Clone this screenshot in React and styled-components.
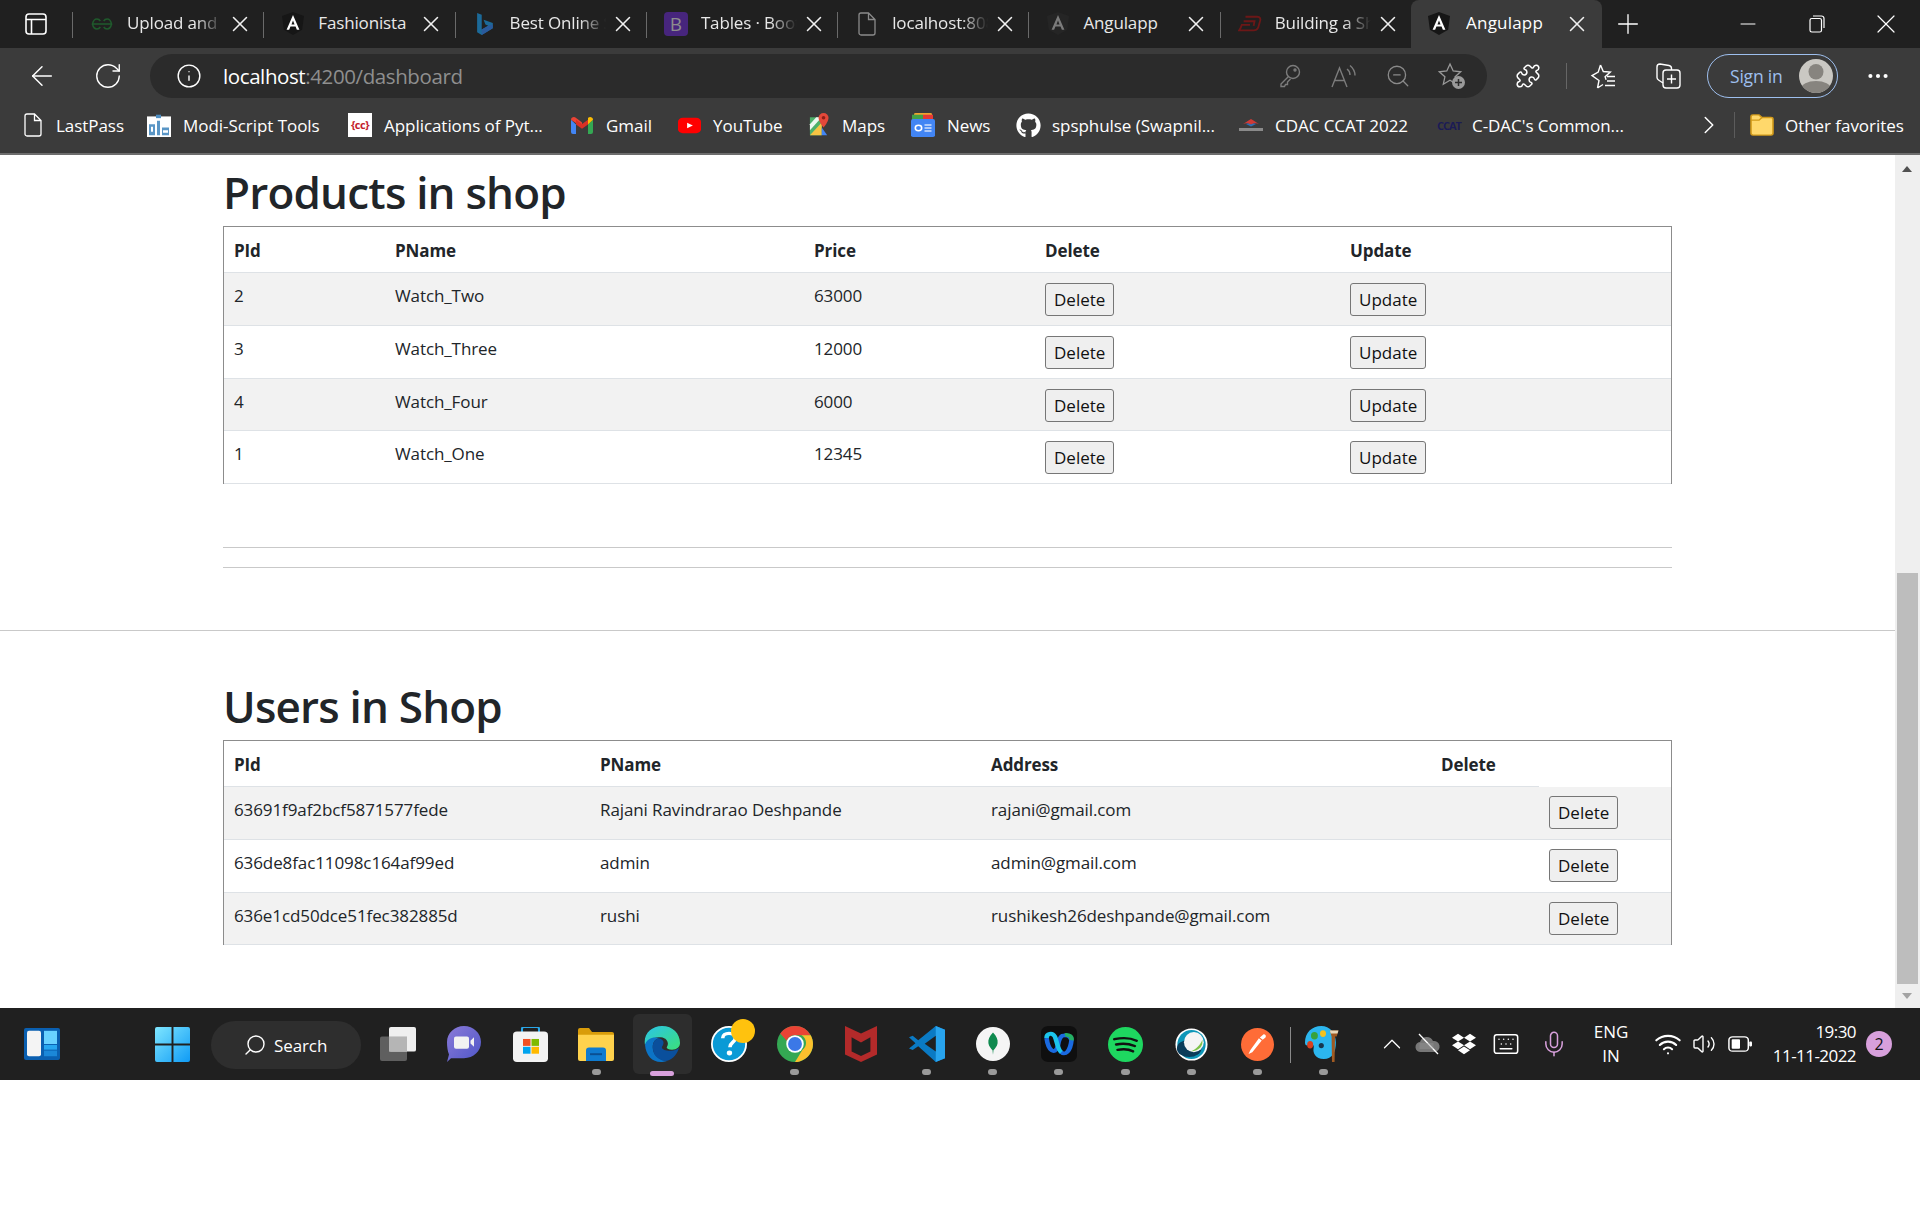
import React from "react";
import styled, { createGlobalStyle } from "styled-components";
import { ArrowLeft, RotateCw, Info, ZoomOut, Puzzle, X, Plus, Minus, ChevronRight, ChevronUp, Mic, Search, Keyboard, Wifi, Volume2, MoreHorizontal } from "lucide-react";
import { FaGithub, FaDropbox } from "react-icons/fa";

const SANS = `"Open Sans", "Noto Sans", "Liberation Sans", sans-serif`;

const Global = createGlobalStyle`
  html, body { margin: 0; padding: 0; background: #fff; font-family: ${SANS}; }
  * { box-sizing: border-box; }
`;

const Screen = styled.div`
  width: 1920px;
  height: 1214px;
  display: flex;
  flex-direction: column;
  background: #fff;
  overflow: hidden;
`;

/* ---------- tab strip ---------- */
const TabBar = styled.div`
  height: 48px;
  flex: none;
  display: flex;
  align-items: stretch;
  background: #202020;
  color: #fff;
`;
const PanelSlot = styled.div`
  width: 72px;
  display: flex;
  align-items: center;
  justify-content: center;
  padding-right: 1px;
`;
const Tab = styled.div`
  width: 191.300px;
  flex: none;
  position: relative;
  display: flex;
  align-items: center;
  padding-left: ${p => (p.$active ? "16px" : "18px")};
  padding-bottom: 1px;
  background: ${p => (p.$active ? "#3b3b3b" : "transparent")};
  border-radius: 8px 8px 0 0;
  &::before {
    content: "";
    display: ${p => (p.$plain ? "none" : "block")};
    position: absolute;
    left: 0;
    top: 12px;
    bottom: 10px;
    width: 1px;
    background: #6a6a6a;
  }
`;
const TabIcon = styled.span`
  width: 24px;
  height: 24px;
  flex: none;
  display: flex;
  align-items: center;
  justify-content: center;
  margin-right: ${p => (p.$active ? "15px" : "13px")};
`;
const TabLabel = styled.span`
  width: ${p => (p.$active ? "94px" : "96px")};
  flex: none;
  overflow: hidden;
  white-space: nowrap;
  font-size: 17px;
  line-height: 22px;
  margin-bottom: 1px;
  letter-spacing: ${p => (p.$active ? "0.2px" : "-0.15px")};
  color: ${p => (p.$active ? "#fff" : "#e8e8e8")};
  mask-image: ${p => (p.$fade ? "linear-gradient(to right, #000 72%, transparent 100%)" : "none")};
`;
const TabClose = styled.span`
  display: flex;
  margin-left: 4px;
  color: #f0f0f0;
`;
const NewTab = styled.div`
  width: 52px;
  display: flex;
  align-items: center;
  justify-content: center;
`;
const WindowControls = styled.div`
  margin-left: auto;
  display: flex;
  align-items: center;
`;
const WindowButton = styled.div`
  width: 69px;
  height: 48px;
  display: flex;
  align-items: center;
  justify-content: center;
`;
const BootstrapMark = styled.span`
  width: 24px;
  height: 24px;
  border-radius: 4px;
  background: #47257d;
  color: #8d8d8d;
  font-size: 19px;
  line-height: 24px;
  text-align: center;
`;

/* ---------- toolbar ---------- */
const Toolbar = styled.div`
  height: 64px;
  flex: none;
  display: flex;
  align-items: center;
  padding: 0 0 8px 9px;
  background: #3b3b3b;
  color: #fff;
`;
const NavButton = styled.div`
  width: ${p => p.$w || 66}px;
  height: 44px;
  flex: none;
  display: flex;
  align-items: center;
  justify-content: center;
`;
const Omnibox = styled.div`
  width: 1337px;
  height: 44px;
  margin: 0 3px 0 9px;
  flex: none;
  display: flex;
  align-items: center;
  padding-left: 26px;
  border-radius: 22px;
  background: #2b2b2b;
`;
const UrlHost = styled.span`
  margin-left: 21px;
  font-size: 20.500px;
  letter-spacing: -0.4px;
  color: #fff;
`;
const UrlRest = styled.span`
  font-size: 20.500px;
  letter-spacing: -0.4px;
  color: #8f8f8f;
`;
const OmniIcons = styled.div`
  margin-left: auto;
  display: flex;
  padding-right: 8px;
`;
const ToolDivider = styled.div`
  width: 1px;
  height: 26px;
  background: #666;
  flex: none;
`;
const SignIn = styled.div`
  width: 131px;
  height: 44px;
  flex: none;
  margin-left: 10px;
  display: flex;
  align-items: center;
  gap: 16px;
  padding-left: 22px;
  border: 1.500px solid #9ebfee;
  border-radius: 22px;
  font-size: 17.500px;
  letter-spacing: -0.2px;
  color: #9ebfee;
`;
const Avatar = styled.span`
  width: 34px;
  height: 34px;
  flex: none;
  border-radius: 50%;
  overflow: hidden;
  display: flex;
`;

/* ---------- bookmarks ---------- */
const Bookmarks = styled.div`
  height: 43px;
  flex: none;
  display: flex;
  align-items: flex-start;
  background: #3b3b3b;
  border-bottom: 2px solid #6d6d6d;
  color: #fff;
`;
const Bookmark = styled.div`
  width: ${p => p.$w}px;
  height: 26px;
  flex: none;
  display: flex;
  align-items: center;
  padding-left: ${p => p.$pad}px;
  gap: ${p => p.$gap || 12}px;
  font-size: 17px;
  letter-spacing: -0.05px;
  white-space: nowrap;
`;
const CcMark = styled.span`
  width: 24px;
  height: 24px;
  flex: none;
  background: #fff;
  color: #c3202b;
  font-size: 11px;
  font-weight: 700;
  letter-spacing: -0.5px;
  line-height: 24px;
  text-align: center;
`;
const CcatMark = styled.span`
  width: 24px;
  flex: none;
  color: #1b1b55;
  font-size: 11px;
  font-weight: 700;
  letter-spacing: -1px;
  text-align: center;
`;
const BookmarkMore = styled.div`
  width: 52px;
  height: 26px;
  flex: none;
  display: flex;
  align-items: center;
  justify-content: center;
  border-right: 1px solid #5c5c5c;
`;

/* ---------- page ---------- */
const Viewport = styled.div`
  height: 853px;
  flex: none;
  display: flex;
  align-items: stretch;
`;
const Page = styled.main`
  flex: 1;
  min-width: 0;
  padding-top: 13px;
  color: #212529;
`;
const Container = styled.section`
  width: 1449px;
  margin-left: 223px;
`;
const Heading = styled.h2`
  margin: 0 0 ${p => p.$after}px;
  font-size: 44px;
  font-weight: 600;
  line-height: 48px;
  letter-spacing: -0.8px;
`;
const Table = styled.table`
  width: 1449px;
  table-layout: fixed;
  border-collapse: separate;
  border-spacing: 0;
  border: 1px solid #8c8c8c;
  border-bottom: 0;
  font-size: 17px;
  letter-spacing: -0.1px;
`;
const Col = styled.col`
  width: ${p => p.$w}px;
`;
const Th = styled.th`
  height: 46px;
  padding: 2px 10px 0;
  text-align: left;
  font-weight: 700;
  border-bottom: 1px solid #dee2e6;
`;
const Row = styled.tr`
  background: ${p => (p.$odd ? "#f2f2f2" : "#fff")};
`;
const Td = styled.td`
  height: 52.750px;
  padding: 11px 10px 0;
  vertical-align: top;
  line-height: 24px;
  border-bottom: 1px solid #dee2e6;
`;
const ActionTd = styled.td`
  height: 52.750px;
  padding: ${p => p.$top}px 10px 0;
  vertical-align: top;
  border-bottom: 1px solid #dee2e6;
`;
const RowButton = styled.button`
  height: 33px;
  padding: 0 8px;
  background: #efefef;
  border: 1px solid #767676;
  border-radius: 3px;
  color: #111;
  font-family: inherit;
  font-size: 17px;
  letter-spacing: 0;
`;
const Rule = styled.hr`
  margin: ${p => p.$top}px 0 0;
  border: 0;
  border-top: 1px solid #c9c9c9;
`;
const PageRule = styled(Rule)`
  margin-bottom: 51px;
`;
const Scrollbar = styled.div`
  width: 25px;
  flex: none;
  position: relative;
  background: #efefef;
`;
const ScrollArrow = styled.div`
  position: absolute;
  left: 7px;
  ${p => (p.$up ? "top: 11px;" : "bottom: 9px;")}
  width: 0;
  height: 0;
  border-left: 5.500px solid transparent;
  border-right: 5.500px solid transparent;
  ${p => (p.$up ? "border-bottom: 6px solid #505050;" : "border-top: 6px solid #a3a3a3;")}
`;
const ScrollThumb = styled.div`
  position: absolute;
  left: 2px;
  right: 2px;
  top: 418px;
  height: 411px;
  background: #bdbdbd;
`;

/* ---------- taskbar ---------- */
const Taskbar = styled.footer`
  height: 72px;
  flex: none;
  display: flex;
  align-items: stretch;
  background: #202020;
  color: #fff;
`;
const WidgetSlot = styled.div`
  width: 60px;
  flex: none;
  padding-left: 24px;
  display: flex;
  align-items: center;
`;
const StartSlot = styled.div`
  width: 151px;
  flex: none;
  padding-left: 95px;
  display: flex;
  align-items: center;
`;
const SearchPill = styled.div`
  width: 150px;
  height: 48px;
  margin: 13px 4px 0 0;
  flex: none;
  display: flex;
  align-items: center;
  gap: 7px;
  padding-left: 32px;
  border-radius: 24px;
  background: #2e2e2e;
  font-size: 17px;
  letter-spacing: -0.1px;
`;
const TaskGroup = styled.div`
  display: flex;
  flex: none;
`;
const TaskSlot = styled.div`
  width: 66.100px;
  height: 72px;
  flex: none;
  position: relative;
  display: flex;
  align-items: center;
  justify-content: center;
  &::after {
    content: "";
    display: ${p => (p.$dot ? "block" : "none")};
    position: absolute;
    left: 50%;
    bottom: ${p => (p.$active ? "4px" : "5px")};
    width: ${p => (p.$active ? "24px" : "9px")};
    height: ${p => (p.$active ? "5px" : "6px")};
    margin-left: ${p => (p.$active ? "-12px" : "-4.5px")};
    border-radius: 3px;
    background: ${p => (p.$active ? "#d8a0dc" : "#9a9a9a")};
  }
  &::before {
    content: "";
    display: ${p => (p.$divider ? "block" : "none")};
    position: absolute;
    left: 0;
    top: 19px;
    height: 36px;
    width: 1px;
    background: #8a8a8a;
  }
`;
const ActiveTile = styled.div`
  width: 59px;
  height: 60px;
  display: flex;
  align-items: center;
  justify-content: center;
  border-radius: 6px;
  background: #2d2d2d;
`;
const Tray = styled.div`
  margin-left: auto;
  padding-right: 28px;
  display: flex;
  align-items: center;
`;
const TraySlot = styled.div`
  width: ${p => p.$w}px;
  flex: none;
  display: flex;
  align-items: center;
  justify-content: center;
  color: ${p => p.$color || "#fff"};
`;
const LangText = styled.div`
  width: 66px;
  flex: none;
  text-align: center;
  font-size: 17px;
  line-height: 24px;
  letter-spacing: -0.1px;
`;
const Clock = styled.div`
  width: 92px;
  flex: none;
  text-align: right;
  font-size: 17px;
  line-height: 24px;
  letter-spacing: -0.55px;
  white-space: nowrap;
`;
const Badge = styled.div`
  width: 26px;
  height: 26px;
  flex: none;
  margin-left: 10px;
  border-radius: 50%;
  background: #d8a0dc;
  color: #111;
  font-size: 16px;
  line-height: 26px;
  text-align: center;
`;
const HelpWrap = styled.div`
  position: relative;
  width: 36px;
  height: 36px;
  display: flex;
`;
const HelpBadge = styled.div`
  position: absolute;
  right: -8px;
  top: -7px;
  width: 24px;
  height: 24px;
  border-radius: 50%;
  background: #ffc20e;
`;

/* ---------- drawn icons ---------- */
const PanelIcon = () => (
  <svg width="22" height="24" viewBox="0 0 22 24" fill="none" stroke="#fff" strokeWidth="1.6">
    <rect x="1" y="2" width="20" height="20" rx="3" />
    <path d="M1 7.500h20M6.500 7.500V22" />
  </svg>
);
const GfgIcon = () => (
  <svg width="22" height="14" viewBox="0 0 22 14" fill="none" stroke="#1f5a2c" strokeWidth="1.5">
    <path d="M11 7H1.500c.6-3 2.300-5 4.400-5 1.500 0 2.700.8 3.400 2M11 7h9.500c-.6-3-2.300-5-4.400-5-1.500 0-2.700.8-3.400 2M1.500 7c.6 3 2.300 5 4.400 5 1.500 0 2.700-.8 3.400-2M20.500 7c-.6 3-2.300 5-4.400 5-1.500 0-2.700-.8-3.400-2" />
  </svg>
);
const AngularIcon = ({ dim }) => (
  <svg width="22" height="23" viewBox="0 0 24 26" preserveAspectRatio="none">
    <path d="M12 0 24 4.400 22 20 12 26 2 20 0 4.400Z" fill={dim ? "#252525" : "#161616"} />
    <path d="M12 3.500 5 20h2.800l1.400-3.600h5.600l1.400 3.600H19ZM10.300 14 12 9.600l1.700 4.400Z" fill={dim ? "#7b7b7b" : "#fff"} fillRule="evenodd" />
  </svg>
);
const BingIcon = () => (
  <svg width="17" height="24" viewBox="0 0 18 26">
    <path d="M1 1 6 3v16l7-4-3-1.500-2-5 10 3.500v5.500L6 25l-5-3Z" fill="#1c6a99" />
    <path d="M6 19l7-4 4.900-1.500v4L6 25Z" fill="#2a5a9c" />
  </svg>
);
const FileIcon = ({ w = 18, h = 24, color = "#8a8a8a" }) => (
  <svg width={w} height={h} viewBox="0 0 18 24" fill="none" stroke={color} strokeWidth="1.3">
    <path d="M3 1h7.500L17 7.500V21a2 2 0 0 1-2 2H3a2 2 0 0 1-2-2V3a2 2 0 0 1 2-2ZM10.500 1v6.500H17" />
  </svg>
);
const RedIcon = () => (
  <svg width="26" height="20" viewBox="0 0 26 22" fill="none" stroke="#6c1717" strokeWidth="2">
    <path d="M8 3h13c3 0 4 2 3 5l-2 7c-1 2-2 3-5 3H1c1-1 2-3 3-6h9M6 8h12l-1 5" />
  </svg>
);
const RestoreIcon = () => (
  <svg width="16" height="18" viewBox="0 0 16 18" fill="none" stroke="#fff" strokeWidth="1.200">
    <rect x="1" y="3.500" width="11.500" height="13.500" rx="1.800" />
    <path d="M4 1h8.500A2.500 2.500 0 0 1 15 3.500V13" />
  </svg>
);
const KeyIcon = () => (
  <svg width="22" height="24" viewBox="0 0 22 24" fill="none" stroke="#7c7c7c" strokeWidth="1.400">
    <circle cx="14" cy="8" r="6.500" />
    <circle cx="16" cy="6" r="1" />
    <path d="M9.500 12.500 2 20v2.500h3.500l1-2h2v-2.500l3-3" />
  </svg>
);
const ReadIcon = () => (
  <svg width="26" height="24" viewBox="0 0 26 24" fill="none" stroke="#7c7c7c" strokeWidth="1.400">
    <path d="M1 23 8.500 4 16 23M4 16.500h9M16 5c2 1.500 3 3.500 3 6M19 1.500c3 2.500 5 5.500 5 10" />
  </svg>
);
const FavAddIcon = () => (
  <svg width="28" height="28" viewBox="0 0 28 28" fill="none">
    <path d="M12 2l3.200 7 7.500.8-5.600 5 1.600 7.400-6.700-3.900-6.700 3.900 1.600-7.400-5.600-5 7.500-.8Z" stroke="#9a9a9a" strokeWidth="1.300" />
    <circle cx="20.500" cy="20.500" r="6.500" fill="#9a9a9a" />
    <path d="M20.500 17v7M17 20.500h7" stroke="#2b2b2b" strokeWidth="1.500" />
  </svg>
);
const FavoritesIcon = () => (
  <svg width="26" height="26" viewBox="0 0 26 26" fill="none" stroke="#fff" strokeWidth="1.400">
    <path d="M10.500 2l2.800 6.500 7 .6-5.200 4.600 1 3M7.500 25l1.500-7.500L2 12.600l6.200-3.500 2.300-7.100M7.500 25l5.500-3.500M17 13.500h8M17 18h8M15 22.500h10" />
  </svg>
);
const CollectionsIcon = () => (
  <svg width="26" height="28" viewBox="0 0 26 28" fill="none" stroke="#fff" strokeWidth="1.400">
    <path d="M8 21 3.500 18A3 3 0 0 1 2 15.500V5a3 3 0 0 1 3-3l9 1.500a3 3 0 0 1 2.500 3V8" />
    <rect x="8" y="8" width="17" height="18" rx="3" />
    <path d="M16.500 12.500v9M12 17h9" />
  </svg>
);
const AvatarArt = () => (
  <svg width="34" height="34" viewBox="0 0 34 40" preserveAspectRatio="none">
    <rect width="34" height="40" fill="#cac8c3" />
    <ellipse cx="17" cy="15" rx="7.500" ry="9" fill="#87847f" />
    <ellipse cx="17" cy="35" rx="15" ry="9" fill="#87847f" />
  </svg>
);
const ModiIcon = () => (
  <svg width="24" height="24" viewBox="0 0 24 28" preserveAspectRatio="none">
    <rect y="4" width="24" height="24" fill="#fff" />
    <path d="M2 13h6v13H2ZM10 9h3v17h-3ZM15 17h7v9h-7Z" fill="#5a96c6" />
    <path d="M4 16h2v6H4ZM16 20h5v3h-5Z" fill="#fff" />
    <rect x="9" y="2" width="5" height="4" fill="#4f8fc2" />
  </svg>
);
const GmailIcon = () => (
  <svg width="22" height="17" viewBox="0 0 22 18" preserveAspectRatio="none">
    <path d="M0 3v13a2 2 0 0 0 2 2h3V8Z" fill="#4285f4" />
    <path d="M22 3v13a2 2 0 0 1-2 2h-3V8Z" fill="#34a853" />
    <path d="M0 3c0-2.500 2.800-3.800 4.800-2.200L11 5.800v5L0 3Z" fill="#ea4335" />
    <path d="M5 8 11 12.500 17 8V2.800L11 7.500 5 2.800Z" fill="#d93025" />
    <path d="M22 3c0-2.500-2.800-3.800-4.800-2.200L17 1v7Z" fill="#fbbc04" />
  </svg>
);
const YoutubeIcon = () => (
  <svg width="23" height="17" viewBox="0 0 24 22" preserveAspectRatio="none">
    <rect y="1" width="24" height="20" rx="5" fill="#f00" />
    <path d="M9.500 7.500v7l6-3.500Z" fill="#fff" />
  </svg>
);
const MapsIcon = () => (
  <svg width="20" height="24" viewBox="0 0 22 28" preserveAspectRatio="none">
    <path d="M1 5h13v21L1 26Z" fill="#4db06a" />
    <path d="M1 26 14 11v15Z" fill="#f6c343" />
    <path d="M1 13 8 5h6L1 20Z" fill="#fff" opacity=".9" />
    <path d="M14 17 20 26h-6Z" fill="#4285f4" />
    <path d="M16 0a5.500 5.500 0 0 1 5.500 5.500C21.500 10 16 17 16 17s-5.500-7-5.500-11.500A5.500 5.500 0 0 1 16 0Z" fill="#e3483a" />
    <circle cx="16" cy="5.500" r="2" fill="#8d1f17" />
  </svg>
);
const NewsIcon = () => (
  <svg width="24" height="24" viewBox="0 0 24 28" preserveAspectRatio="none">
    <rect x="3" width="18" height="8" rx="1.500" fill="#f0a32f" />
    <rect x="1" y="2" width="11" height="7" fill="#43a047" />
    <rect x="12" y="2" width="10" height="7" fill="#e53935" />
    <rect y="7" width="24" height="21" rx="2" fill="#4285f4" />
    <circle cx="7.500" cy="17.500" r="3.200" fill="none" stroke="#fff" strokeWidth="1.600" />
    <path d="M13.500 14h7M13.500 17.500h7M13.500 21h7" stroke="#cfe0fb" strokeWidth="1.600" />
  </svg>
);
const CdacIcon = () => (
  <svg width="24" height="14" viewBox="0 0 24 14">
    <path d="M4 6c3-2 5-3 8-5 3 2 5 3 8 5-3-1-5-1-8 1-3-2-5-2-8-1Z" fill="#cf3a36" />
    <path d="M7 6c2-.6 3-.6 5 .6 2-1.200 3-1.200 5-.6l-5 2.500Z" fill="#2f6fb4" />
    <rect y="10" width="24" height="3" fill="#8a8a8a" />
  </svg>
);
const FolderIcon = () => (
  <svg width="24" height="22" viewBox="0 0 24 25" preserveAspectRatio="none">
    <path d="M1 3a2 2 0 0 1 2-2h6l3 3h9a2 2 0 0 1 2 2v16a2 2 0 0 1-2 2H3a2 2 0 0 1-2-2Z" fill="#ffd86b" stroke="#d29a1a" strokeWidth="1.600" />
    <path d="M1 7h8l3-3" fill="none" stroke="#d29a1a" strokeWidth="1.600" />
  </svg>
);
const WidgetsIcon = () => (
  <svg width="36" height="32" viewBox="0 0 36 34" preserveAspectRatio="none">
    <rect width="36" height="34" rx="2" fill="#0a5fb0" />
    <rect x="3" y="3" width="14" height="27" rx="2" fill="#f4f4f4" />
    <rect x="20" y="3" width="13" height="14" fill="#69d2ff" />
    <rect x="20" y="18" width="13" height="5" fill="#27a7f0" />
    <rect x="20" y="24" width="13" height="6" fill="#1b87d8" />
  </svg>
);
const WindowsIcon = () => (
  <svg width="35" height="35" viewBox="0 0 36 36">
    <defs>
      <linearGradient id="winG" x1="0" y1="0" x2="1" y2="1">
        <stop offset="0" stopColor="#7fe6ff" />
        <stop offset="1" stopColor="#0f9bf5" />
      </linearGradient>
    </defs>
    <path d="M0 2a2 2 0 0 1 2-2h15v17H0ZM19 0h15a2 2 0 0 1 2 2v15H19ZM0 19h17v17H2a2 2 0 0 1-2-2ZM19 19h17v15a2 2 0 0 1-2 2H19Z" fill="url(#winG)" />
  </svg>
);
const TaskViewIcon = () => (
  <svg width="36" height="34" viewBox="0 0 36 36" preserveAspectRatio="none">
    <rect y="10" width="27" height="26" rx="2" fill="#5f5f5f" />
    <rect x="9" width="27" height="26" rx="2" fill="#efefef" />
    <rect x="9" y="10" width="18" height="16" fill="#b5b5b5" />
  </svg>
);
const TeamsIcon = () => (
  <svg width="34" height="36" viewBox="0 0 34 38" preserveAspectRatio="none">
    <defs>
      <linearGradient id="teamsG" x1="0" y1="0" x2="1" y2="1">
        <stop offset="0" stopColor="#8a7ad8" />
        <stop offset="1" stopColor="#4e56c8" />
      </linearGradient>
    </defs>
    <path d="M17 0c9.400 0 17 7.500 17 17 0 10-7.600 17-17 17H4l-4 4 2-8C.6 27 0 22 0 17 0 7.500 7.600 0 17 0Z" fill="url(#teamsG)" />
    <rect x="7" y="11" width="15" height="13" rx="2" fill="#f2f2f2" />
    <path d="M23.500 15.500 27 12v10l-3.500-3.500Z" fill="#f2f2f2" />
  </svg>
);
const StoreIcon = () => (
  <svg width="35" height="35" viewBox="0 0 35 38" preserveAspectRatio="none">
    <path d="M9 6V2a2 2 0 0 1 2-2h13a2 2 0 0 1 2 2v4" fill="none" stroke="#2aa7e8" strokeWidth="2" />
    <rect y="5" width="35" height="33" rx="4" fill="#f3f3f3" />
    <rect x="10" y="13" width="7.500" height="7.500" fill="#f25022" />
    <rect x="18.500" y="13" width="7.500" height="7.500" fill="#7fba00" />
    <rect x="10" y="21.500" width="7.500" height="7.500" fill="#00a4ef" />
    <rect x="18.500" y="21.500" width="7.500" height="7.500" fill="#ffb900" />
  </svg>
);
const ExplorerIcon = () => (
  <svg width="36" height="33" viewBox="0 0 36 34" preserveAspectRatio="none">
    <path d="M0 2a2 2 0 0 1 2-2h9l3 4h20a2 2 0 0 1 2 2v5H0Z" fill="#d99c0a" />
    <path d="M0 7h36v25a2 2 0 0 1-2 2H2a2 2 0 0 1-2-2Z" fill="#ffd24d" />
    <path d="M8 23a3 3 0 0 1 3-3h14a3 3 0 0 1 3 3v11H8Z" fill="#0f7bd0" />
    <rect x="12" y="26" width="12" height="2" fill="#0a4f92" />
  </svg>
);
const EdgeIcon = () => (
  <svg width="36" height="36" viewBox="0 0 36 38" preserveAspectRatio="none">
    <defs>
      <linearGradient id="edgeA" x1="0" y1="0" x2="1" y2="1">
        <stop offset="0" stopColor="#2bc4e8" />
        <stop offset="1" stopColor="#3be07a" />
      </linearGradient>
    </defs>
    <path d="M18 0c11 0 18 8 18 18 0 4-3 7-8 7-4 0-6-2-5-3 2-3 1-9-6-10C9 11 3 16 1 20-1 9 7 0 18 0Z" fill="url(#edgeA)" />
    <path d="M1 20C3 13 10 11 15 13c-5 1-7 6-6 12 1 7 8 11 14 12-3 1-4 1-6 1C8 38 2 31 1 20Z" fill="#0c74c6" />
    <path d="M9 25c-1-6 1-11 6-12 6 2 5 6 3 9-1 2 3 5 9 4 3 0 6-1 8-3-2 8-8 14-14 14-6-1-11-5-12-12Z" fill="#0a4f9c" />
  </svg>
);
const HelpArt = () => (
  <svg width="36" height="36" viewBox="0 0 40 44" preserveAspectRatio="none">
    <ellipse cx="20" cy="22" rx="19" ry="21" fill="#0a9ad6" stroke="#fff" strokeWidth="2" />
    <path d="M13 15c0-4 3-6 7-6s7 2 7 6c0 5-6 5-6 11" fill="none" stroke="#fff" strokeWidth="4" />
    <circle cx="20.500" cy="33" r="3" fill="#fff" />
  </svg>
);
const ChromeIcon = () => (
  <svg width="36" height="36" viewBox="0 0 39 39">
    <circle cx="19.500" cy="19.500" r="19.500" fill="#34a853" />
    <path d="M19.500 0a19.500 19.500 0 0 1 17 10H19.500a9.500 9.500 0 0 0-9 6L3.500 8A19.500 19.500 0 0 1 19.500 0Z" fill="#ea4335" />
    <path d="M36.500 10a19.500 19.500 0 0 1-17 29l8-13a9.500 9.500 0 0 0-1-16Z" fill="#fbc02d" />
    <circle cx="19.500" cy="19.500" r="9.500" fill="#fff" />
    <circle cx="19.500" cy="19.500" r="7.500" fill="#3b78e7" />
  </svg>
);
const McafeeIcon = () => (
  <svg width="32" height="36" viewBox="0 0 34 48" preserveAspectRatio="none">
    <path d="M0 0 17 10 34 0v38L17 48 0 38ZM7 15v19l10 6 10-6V15l-10 7Z" fill="#b32a2a" fillRule="evenodd" />
  </svg>
);
const VscodeIcon = () => (
  <svg width="36" height="36" viewBox="0 0 39 48" preserveAspectRatio="none">
    <path d="M29 0 39 5v38l-10 5L10 27l-6 5-4-2 7-7-7-8 4-2 6 6Z" fill="#0a7ac4" />
    <path d="M29 0 39 5v38l-10 5Z" fill="#28a4ee" />
    <path d="M29 13v21l-12-10.500Z" fill="#202020" />
  </svg>
);
const MongoIcon = () => (
  <svg width="34" height="34" viewBox="0 0 37 44" preserveAspectRatio="none">
    <ellipse cx="18.500" cy="22" rx="18.500" ry="22" fill="#f5f5f5" />
    <path d="M18.500 7c4 5 5.500 9 5 14-.5 4-3 7-4.500 9l-.5 6-.5-6c-1.500-2-4-5-4.500-9-.5-5 1-9 5-14Z" fill="#0f8a4f" />
  </svg>
);
const WebexIcon = () => (
  <svg width="36" height="36" viewBox="0 0 39 48" preserveAspectRatio="none">
    <rect width="39" height="48" rx="8" fill="#0f0f0f" />
    <path d="M6 16c2 18 9 22 12 12 1-5 1-12 5-15 5-2 9 1 10 6-1 14-7 22-12 15" fill="none" stroke="#1a6ae0" strokeWidth="5" />
    <path d="M6 16c0-6 6-8 9-2 2 5 3 18 7 21" fill="none" stroke="#1bc5ec" strokeWidth="5" />
    <path d="M26 12c4-1 8 2 7 7" fill="none" stroke="#25b065" strokeWidth="5" />
  </svg>
);
const SpotifyIcon = () => (
  <svg width="35" height="35" viewBox="0 0 38 46" preserveAspectRatio="none">
    <ellipse cx="19" cy="23" rx="19" ry="23" fill="#1ed760" />
    <path d="M7 16c8-2 17-2 24 2M9 23c7-2 14-1 20 2M10.500 30c6-1.500 12-1 16.500 2" fill="none" stroke="#111" strokeWidth="3.200" strokeLinecap="round" />
  </svg>
);
const CiscoLikeIcon = () => (
  <svg width="33" height="33" viewBox="0 0 35 42" preserveAspectRatio="none">
    <ellipse cx="17.500" cy="21" rx="17" ry="20.500" fill="#fff" />
    <ellipse cx="17.500" cy="21" rx="15" ry="18.500" fill="#0d96b8" />
    <ellipse cx="15" cy="26" rx="13" ry="11" fill="#0a3c5a" />
    <ellipse cx="20" cy="18" rx="10.500" ry="13" fill="#f5f5f5" />
    <path d="M29 15c1 8-3 14-12 15 5-3 10-8 12-15Z" fill="#7ec24a" />
  </svg>
);
const PostmanIcon = () => (
  <svg width="33" height="33" viewBox="0 0 35 42" preserveAspectRatio="none">
    <ellipse cx="17.500" cy="21" rx="17.500" ry="21" fill="#ff6c37" />
    <path d="M24 8c2 0 3 2 2 4l-3 3-3-3ZM19 13l3 3-10 15-4 2 2-5Z" fill="#fff" />
  </svg>
);
const PaintIcon = () => (
  <svg width="36" height="36" viewBox="0 0 42 48" preserveAspectRatio="none">
    <path d="M19 0C8 0 0 9 0 22c0 4 2 5 5 3 4-2 6 1 5 5-1 5 2 14 12 14 10 0 14-9 14-22C36 9 29 0 19 0Z" fill="#2cb6ee" />
    <ellipse cx="11" cy="13" rx="4" ry="5" fill="#37a23a" />
    <ellipse cx="21" cy="10" rx="3.500" ry="4.500" fill="#f4c21c" />
    <ellipse cx="6" cy="25" rx="3.500" ry="5" fill="#d8401f" />
    <ellipse cx="19" cy="26" rx="3" ry="3.500" fill="#17364e" />
    <path d="M29 6h10l-2 8h-6ZM31 14h4l-.5 34h-3Z" fill="#a05a22" />
    <path d="M29 6h10l-1 4h-8Z" fill="#e8d7b8" />
  </svg>
);
const CloudOffIcon = () => (
  <svg width="26" height="22" viewBox="0 0 26 22">
    <path d="M6 19a5 5 0 0 1-1-10 7 7 0 0 1 13-1 5.500 5.500 0 0 1 2 11Z" fill="#777" />
    <path d="M4 1 23 21" stroke="#fff" strokeWidth="1.300" />
    <path d="M4.500 13h14" stroke="#999" strokeWidth="6" opacity=".4" />
  </svg>
);
const BatteryIcon = () => (
  <svg width="24" height="16" viewBox="0 0 26 20" preserveAspectRatio="none">
    <rect x="1" y="1" width="21" height="18" rx="4" fill="none" stroke="#fff" strokeWidth="1.600" />
    <rect x="4" y="4" width="9" height="12" rx="1" fill="#fff" />
    <rect x="23" y="7" width="3" height="6" rx="1" fill="#fff" />
  </svg>
);

/* ---------- data ---------- */
const tabs = [
  { label: "Upload and Image", icon: <GfgIcon />, fade: true },
  { label: "Fashionista", icon: <AngularIcon /> },
  { label: "Best Online Shop", icon: <BingIcon />, fade: true },
  { label: "Tables · Bootstrap", icon: <BootstrapMark>B</BootstrapMark>, fade: true },
  { label: "localhost:8080/api", icon: <FileIcon />, fade: true },
  { label: "Angulapp", icon: <AngularIcon dim /> },
  { label: "Building a Shop", icon: <RedIcon />, fade: true },
];
const bookmarks = [
  { label: "LastPass", icon: <FileIcon color="#fff" />, w: 147, pad: 24, gap: 14 },
  { label: "Modi-Script Tools", icon: <ModiIcon />, w: 201, pad: 0, gap: 12 },
  { label: "Applications of Pyt...", icon: <CcMark>{"{cc}"}</CcMark>, w: 223, pad: 0, gap: 12 },
  { label: "Gmail", icon: <GmailIcon />, w: 107, pad: 0, gap: 13 },
  { label: "YouTube", icon: <YoutubeIcon />, w: 131, pad: 0, gap: 12 },
  { label: "Maps", icon: <MapsIcon />, w: 102, pad: 0, gap: 13 },
  { label: "News", icon: <NewsIcon />, w: 105, pad: 0, gap: 12 },
  { label: "spsphulse (Swapnil...", icon: <FaGithub size={25} color="#fff" />, w: 223, pad: 0, gap: 11 },
  { label: "CDAC CCAT 2022", icon: <CdacIcon />, w: 198, pad: 0, gap: 12 },
  { label: "C-DAC's Common...", icon: <CcatMark>CCAT</CcatMark>, w: 246, pad: 0, gap: 11 },
];
const products = [
  ["2", "Watch_Two", "63000"],
  ["3", "Watch_Three", "12000"],
  ["4", "Watch_Four", "6000"],
  ["1", "Watch_One", "12345"],
];
const users = [
  ["63691f9af2bcf5871577fede", "Rajani Ravindrarao Deshpande", "rajani@gmail.com"],
  ["636de8fac11098c164af99ed", "admin", "admin@gmail.com"],
  ["636e1cd50dce51fec382885d", "rushi", "rushikesh26deshpande@gmail.com"],
];
const tasks = [
  { icon: <TaskViewIcon /> },
  { icon: <TeamsIcon /> },
  { icon: <StoreIcon /> },
  { icon: <ExplorerIcon />, dot: true },
  { icon: <ActiveTile><EdgeIcon /></ActiveTile>, dot: true, active: true },
  { icon: <HelpWrap><HelpArt /><HelpBadge /></HelpWrap> },
  { icon: <ChromeIcon />, dot: true },
  { icon: <McafeeIcon /> },
  { icon: <VscodeIcon />, dot: true },
  { icon: <MongoIcon />, dot: true },
  { icon: <WebexIcon />, dot: true },
  { icon: <SpotifyIcon />, dot: true },
  { icon: <CiscoLikeIcon />, dot: true },
  { icon: <PostmanIcon />, dot: true },
  { icon: <PaintIcon />, dot: true, divider: true },
];

export default function App() {
  return (
    <Screen>
      <Global />
      <TabBar>
        <PanelSlot><PanelIcon /></PanelSlot>
        {tabs.map(t => (
          <Tab key={t.label}>
            <TabIcon>{t.icon}</TabIcon>
            <TabLabel $fade={t.fade}>{t.label}</TabLabel>
            <TabClose><X size={26} strokeWidth={1.400} /></TabClose>
          </Tab>
        ))}
        <Tab $active $plain>
          <TabIcon $active><AngularIcon /></TabIcon>
          <TabLabel $active>Angulapp</TabLabel>
          <TabClose><X size={26} strokeWidth={1.400} /></TabClose>
        </Tab>
        <NewTab><Plus size={32} strokeWidth={1} /></NewTab>
        <WindowControls>
          <WindowButton><Minus size={24} strokeWidth={1} /></WindowButton>
          <WindowButton><RestoreIcon /></WindowButton>
          <WindowButton><X size={32} strokeWidth={0.9} /></WindowButton>
        </WindowControls>
      </TabBar>

      <Toolbar>
        <NavButton><ArrowLeft size={32} strokeWidth={1.100} /></NavButton>
        <NavButton><RotateCw size={30} strokeWidth={1.100} /></NavButton>
        <Omnibox>
          <Info size={26} strokeWidth={1.300} />
          <UrlHost>localhost</UrlHost>
          <UrlRest>:4200/dashboard</UrlRest>
          <OmniIcons>
            <NavButton $w={54}><KeyIcon /></NavButton>
            <NavButton $w={54}><ReadIcon /></NavButton>
            <NavButton $w={54}><ZoomOut size={26} strokeWidth={1.200} color="#8a8a8a" /></NavButton>
            <NavButton $w={54}><FavAddIcon /></NavButton>
          </OmniIcons>
        </Omnibox>
        <NavButton $w={76}><Puzzle size={26} strokeWidth={1.400} /></NavButton>
        <ToolDivider />
        <NavButton $w={72}><FavoritesIcon /></NavButton>
        <NavButton $w={58}><CollectionsIcon /></NavButton>
        <SignIn>
          Sign in
          <Avatar><AvatarArt /></Avatar>
        </SignIn>
        <NavButton $w={80}><MoreHorizontal size={26} strokeWidth={1.800} /></NavButton>
      </Toolbar>

      <Bookmarks>
        {bookmarks.map(b => (
          <Bookmark key={b.label} $w={b.w} $pad={b.pad} $gap={b.gap}>
            {b.icon}
            {b.label}
          </Bookmark>
        ))}
        <BookmarkMore><ChevronRight size={30} strokeWidth={1.200} /></BookmarkMore>
        <Bookmark $w={185} $pad={15} $gap={11}>
          <FolderIcon />
          Other favorites
        </Bookmark>
      </Bookmarks>

      <Viewport>
        <Page>
          <Container>
            <Heading $after={10}>Products in shop</Heading>
            <Table>
              <colgroup>
                <Col $w={161} /><Col $w={419} /><Col $w={231} /><Col $w={305} /><Col $w={331} />
              </colgroup>
              <thead>
                <tr>
                  <Th>PId</Th><Th>PName</Th><Th>Price</Th><Th>Delete</Th><Th>Update</Th>
                </tr>
              </thead>
              <tbody>
                {products.map((r, i) => (
                  <Row key={r[0]} $odd={i % 2 === 0}>
                    {r.map((c, j) => <Td key={j}>{c}</Td>)}
                    <ActionTd $top={10}><RowButton>Delete</RowButton></ActionTd>
                    <ActionTd $top={10}><RowButton>Update</RowButton></ActionTd>
                  </Row>
                ))}
              </tbody>
            </Table>
            <Rule $top={63} />
            <Rule $top={19} />
          </Container>
          <PageRule $top={62} />
          <Container>
            <Heading $after={10}>Users in Shop</Heading>
            <Table>
              <colgroup>
                <Col $w={366} /><Col $w={391} /><Col $w={450} /><Col $w={108} /><Col $w={132} />
              </colgroup>
              <thead>
                <tr>
                  <Th>PId</Th><Th>PName</Th><Th>Address</Th><Th>Delete</Th>
                </tr>
              </thead>
              <tbody>
                {users.map((r, i) => (
                  <Row key={r[0]} $odd={i % 2 === 0}>
                    {r.map((c, j) => <Td key={j}>{c}</Td>)}
                    <Td />
                    <ActionTd $top={9}><RowButton>Delete</RowButton></ActionTd>
                  </Row>
                ))}
              </tbody>
            </Table>
          </Container>
        </Page>
        <Scrollbar>
          <ScrollArrow $up />
          <ScrollThumb />
          <ScrollArrow />
        </Scrollbar>
      </Viewport>

      <Taskbar>
        <WidgetSlot><WidgetsIcon /></WidgetSlot>
        <StartSlot><WindowsIcon /></StartSlot>
        <SearchPill><Search size={24} strokeWidth={1.400} style={{ transform: "scaleX(-1)" }} />Search</SearchPill>
        <TaskGroup>
          {tasks.map((t, i) => (
            <TaskSlot key={i} $dot={t.dot} $active={t.active} $divider={t.divider}>{t.icon}</TaskSlot>
          ))}
        </TaskGroup>
        <Tray>
          <TraySlot $w={36}><ChevronUp size={30} strokeWidth={1} /></TraySlot>
          <TraySlot $w={36}><CloudOffIcon /></TraySlot>
          <TraySlot $w={36}><FaDropbox size={24} /></TraySlot>
          <TraySlot $w={48}><Keyboard size={28} strokeWidth={1.300} /></TraySlot>
          <TraySlot $w={48} $color="#d8a0dc"><Mic size={28} strokeWidth={1.300} /></TraySlot>
          <LangText>ENG<br />IN</LangText>
          <TraySlot $w={48}><Wifi size={28} strokeWidth={1.800} /></TraySlot>
          <TraySlot $w={24}><Volume2 size={26} strokeWidth={1.400} /></TraySlot>
          <TraySlot $w={48}><BatteryIcon /></TraySlot>
          <Clock>19:30<br />11-11-2022</Clock>
          <Badge>2</Badge>
        </Tray>
      </Taskbar>
    </Screen>
  );
}
